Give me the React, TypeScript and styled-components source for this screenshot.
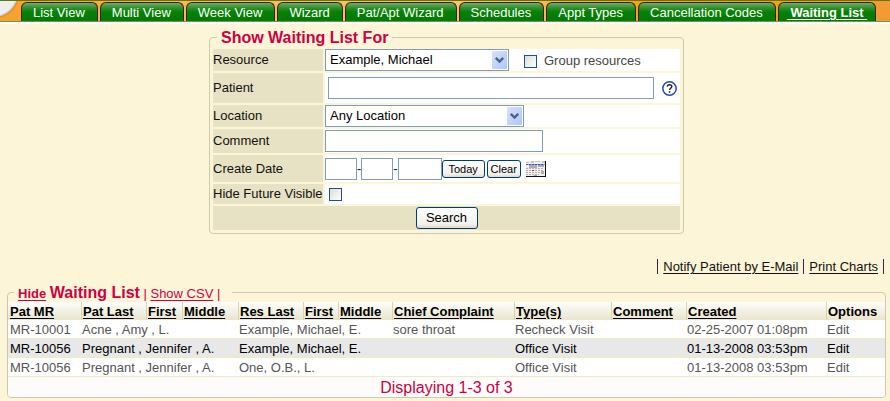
import React from "react";
import styled, { createGlobalStyle, css } from "styled-components";

const GlobalStyle = createGlobalStyle`
  *, *::before, *::after { box-sizing: border-box; }
  body {
    margin: 0;
    background: #fcf5d8;
    color: #111;
    font: 13px/16px "Liberation Sans", Arial, Helvetica, sans-serif;
  }
  input, select, button { font: inherit; color: #000; margin: 0; }
`;

const TabBar = styled.nav`
  position: relative;
  display: flex;
  align-items: flex-end;
  gap: 2px;
  height: 24px;
  padding: 0 14px 1px 21px;
  overflow: hidden;
  border-top: 1px solid #5e7a10;
  border-bottom: 2px solid #fff;
  background: linear-gradient(90deg, #f9a02c 0%, #fdb866 25%, #fdc078 55%, #f9a01c 72%, #f9a01c 88%, #f49a35 100%);
  &::after {
    content: "";
    position: absolute;
    left: 0;
    right: 0;
    bottom: 0;
    height: 1px;
    background: #6f9a4c;
  }
`;

const Orb = styled.svg`
  position: absolute;
  left: 0;
  top: 0;
`;

const Tab = styled.a<{ $active?: boolean }>`
  height: 19px;
  padding: 0 ${(p) => (p.$active ? "8px" : "12px 0 11px")};
  border: 1px solid #3a2205;
  border-bottom: 0;
  border-radius: 6px 6px 0 0;
  background: linear-gradient(#6fae6a 0, #2f8f2a 5px, #058005 9px, #047a04 100%);
  color: #fff;
  line-height: 20px;
  white-space: pre;
  text-decoration: ${(p) => (p.$active ? "underline" : "none")};
  text-underline-offset: 2px;
  font-weight: ${(p) => (p.$active ? "bold" : "normal")};
`;

const Page = styled.main`
  padding: 3px 4px 0 7px;
`;

const Panel = styled.fieldset`
  min-width: 0;
  margin: 0;
  padding: 0;
  border: 1px solid #ccc9b0;
  border-radius: 4px;
`;

const SearchPanel = styled(Panel)`
  width: fit-content;
  margin: 0 auto;
  padding: 0 1px 1px;
`;

const ListPanel = styled(Panel)`
  margin-top: 6px;
`;

const Legend = styled.legend`
  height: 20px;
  margin-left: 6px;
  padding: 0 4px;
  color: #cc0044;
  line-height: 22px;
  white-space: pre;
`;

const Title = styled.span`
  font-size: 16px;
  font-weight: bold;
`;

const LegendLink = styled.a<{ $strong?: boolean }>`
  color: inherit;
  text-underline-offset: 2px;
  font-weight: ${(p) => (p.$strong ? "bold" : "normal")};
`;

const FormTable = styled.table`
  border-collapse: separate;
  border-spacing: 2px;
`;

const FormRow = styled.tr<{ $height: number }>`
  height: ${(p) => p.$height}px;
`;

const LabelCell = styled.th`
  width: 110px;
  padding: 0;
  background: #e7e2c4;
  font-weight: normal;
  text-align: left;
  white-space: nowrap;
`;

const FieldCell = styled.td`
  width: 355px;
  padding: 0;
  background: #fff;
`;

const ActionCell = styled.td`
  padding: 0;
  background: #e7e2c4;
  text-align: center;
`;

const Line = styled.div<{ $indent?: number }>`
  display: flex;
  align-items: center;
  padding-left: ${(p) => p.$indent ?? 0}px;
`;

const TextBox = styled.input<{ $width: number }>`
  width: ${(p) => p.$width}px;
  height: 22px;
  padding: 0 4px;
  border: 1px solid #7f9db9;
  background: #fff;
`;

const SelectWrap = styled.div<{ $width: number }>`
  position: relative;
  width: ${(p) => p.$width}px;
  height: 22px;
`;

const SelectBox = styled.select`
  appearance: none;
  width: 100%;
  height: 100%;
  padding: 0 20px 0 4px;
  border: 1px solid #7f9db9;
  border-radius: 0;
  background: #fff;
`;

const Arrow = styled.svg`
  position: absolute;
  right: 2px;
  top: 2px;
  pointer-events: none;
`;

const Check = styled.input`
  appearance: none;
  width: 13px;
  height: 13px;
  border: 1px solid #1c5180;
  background: linear-gradient(135deg, #dcdcd7, #fff);
`;

const CheckLabel = styled.label`
  display: flex;
  align-items: center;
  gap: 7px;
  margin: 2px 0 0 15px;
  color: #444;
`;

const Button = styled.button<{ $width: number; $small?: boolean }>`
  width: ${(p) => p.$width}px;
  padding: 0;
  border: 1px solid #003c74;
  border-radius: 3px;
  background: linear-gradient(#fff, #f2f1ec 80%, #dcd8cf);
  white-space: nowrap;
  ${(p) =>
    p.$small
      ? css`
          height: 18px;
          margin-right: 2px;
          font-size: 11px;
          line-height: 16px;
        `
      : css`
          height: 22px;
          line-height: 20px;
          vertical-align: middle;
        `}
`;

const IconButton = styled.button<{ $gap: number }>`
  display: flex;
  margin-left: ${(p) => p.$gap}px;
  padding: 0;
  border: 0;
  background: none;
`;

const Links = styled.div`
  display: flex;
  justify-content: flex-end;
  gap: 5px;
  margin-top: 24px;
  padding-right: 2px;
  line-height: 18px;
`;

const Bar = styled.span`
  width: 1px;
  height: 15px;
  margin-top: 1px;
  background: #402048;
`;

const PageLink = styled.a`
  color: #111;
  text-underline-offset: 2px;
`;

const ListTable = styled.table`
  width: 100%;
  border-collapse: separate;
  border-spacing: 0;
  table-layout: fixed;
`;

const HeadCell = styled.th`
  height: 18px;
  padding: 2px 0 0 1px;
  border-left: 1px solid #d8d5b4;
  background: linear-gradient(#fdfdfb, #e9e5cc);
  color: #000;
  line-height: 16px;
  text-align: left;
  white-space: nowrap;
  &:first-child { border-left-color: transparent; }
  a { color: inherit; text-underline-offset: 2px; }
`;

const Row = styled.tr<{ $selected?: boolean }>`
  background: ${(p) => (p.$selected ? "#e8e8e8" : "#fff")};
  color: ${(p) => (p.$selected ? "#000" : "#555")};
`;

const Cell = styled.td`
  height: 19px;
  padding: 2px 0 0 1px;
  border-bottom: 1px solid #efebbb;
  line-height: 16px;
  white-space: nowrap;
  &:first-child { padding-left: 2px; }
  a { color: inherit; text-decoration: none; }
`;

const Footer = styled.td`
  height: 20px;
  padding: 2px 0 0;
  border-radius: 0 0 3px 3px;
  background: #fdfcfa;
  color: #cc0044;
  font-size: 16px;
  line-height: 18px;
  text-align: center;
`;

const tabs = [
  "List View", "Multi View", "Week View", "Wizard", "Pat/Apt Wizard",
  "Schedules", "Appt Types", "Cancellation Codes",
];

const columns: [string, number | undefined][] = [
  ["Pat MR", 73], ["Pat Last", 65], ["First", 36], ["Middle", 56],
  ["Res Last", 65], ["First", 35], ["Middle", 54], ["Chief Complaint", 122],
  ["Type(s)", 97], ["Comment", 75], ["Created", 140], ["Options", undefined],
];

const entries = [
  { mr: "MR-10001", patient: "Acne , Amy , L.", resource: "Example, Michael, E.", complaint: "sore throat", type: "Recheck Visit", created: "02-25-2007 01:08pm" },
  { mr: "MR-10056", patient: "Pregnant , Jennifer , A.", resource: "Example, Michael, E.", complaint: "", type: "Office Visit", created: "01-13-2008 03:53pm", selected: true },
  { mr: "MR-10056", patient: "Pregnant , Jennifer , A.", resource: "One, O.B., L.", complaint: "", type: "Office Visit", created: "01-13-2008 03:53pm" },
];

function DropDown({ id, width, value }: { id: string; width: number; value: string }) {
  return (
    <SelectWrap $width={width}>
      <SelectBox id={id} defaultValue={value}>
        <option>{value}</option>
      </SelectBox>
      <Arrow width="15" height="18" viewBox="0 0 15 18" aria-hidden="true">
        <defs>
          <linearGradient id={`${id}-face`} x1="0" y1="0" x2="1" y2="1">
            <stop offset="0" stopColor="#d6e2fd" />
            <stop offset="1" stopColor="#adc6f8" />
          </linearGradient>
        </defs>
        <rect width="15" height="18" rx="1" fill={`url(#${id}-face)`} />
        <path d="M3.8 6.8 7.5 10.5 11.2 6.8" fill="none" stroke="#4d6185" strokeWidth="2.4" />
      </Arrow>
    </SelectWrap>
  );
}

function HelpIcon() {
  return (
    <svg width="15" height="15" viewBox="0 0 15 15" aria-hidden="true">
      <circle cx="7.5" cy="7.5" r="6.7" fill="#fff" stroke="#1f4bb8" strokeWidth="1.5" />
      <path d="M5.3 5.8C5.3 4.3 6.2 3.7 7.5 3.7s2.3.7 2.3 1.9c0 1.5-2.2 1.6-2.2 3.4" fill="none" stroke="#222" strokeWidth="1.4" />
      <rect x="6.8" y="10.2" width="1.5" height="1.5" fill="#222" />
    </svg>
  );
}

function CalendarIcon() {
  return (
    <svg width="20" height="16" viewBox="0 0 20 16" shapeRendering="crispEdges" aria-hidden="true">
      <rect width="19" height="15" fill="#f0f0f0" />
      <path d="M0 1h3v1H0zM5 0h3v2H5zM9 0h5v1H9zM16 0h3v2h-3z" fill="#c4c4c4" />
      <path d="M0 3h19v1H0z" fill="#8f96dc" />
      <path d="M0 3h2v1H0zM3 3h2v1H3zM6 3h2v1H6zM9 3h2v1H9zM12 3h2v1h-2zM15 3h2v1h-2z" fill="#4450d0" />
      <path d="M3 4h8v3H3zM12 4h6v2h-6zM15 10h3v3h-3z" fill="#acacac" />
      <path d="M0 7.5h18M0 9.5h18M0 11.5h18M0 13.5h13" stroke="#b4b4b4" strokeDasharray="2 1" />
      <path d="M6 9h2v1H6z" fill="#e02020" />
      <path d="M8 14h3v1H8z" fill="#aaa" />
      <path d="M19 0h1v16H0v-1h19z" fill="#111" />
    </svg>
  );
}

export default function App() {
  return (
    <>
      <GlobalStyle />
      <TabBar>
        <Orb width="22" height="20" viewBox="0 0 22 20" aria-hidden="true">
          <circle cx="-5" cy="-7" r="24" fill="#e08f28" />
          <circle cx="-6" cy="-8" r="24" fill="#d0cfcc" />
          <circle cx="-7" cy="-9" r="24" fill="#efefef" />
        </Orb>
        {tabs.map((t) => <Tab href="#" key={t}>{t}</Tab>)}
        <Tab href="#" $active aria-current="page">{"\u00a0Waiting List\u00a0"}</Tab>
      </TabBar>
      <Page>
        <SearchPanel>
          <Legend><Title>Show Waiting List For</Title></Legend>
          <FormTable>
            <tbody>
              <FormRow $height={22}>
                <LabelCell><label htmlFor="resource">Resource</label></LabelCell>
                <FieldCell>
                  <Line>
                    <DropDown id="resource" width={184} value="Example, Michael" />
                    <CheckLabel><Check type="checkbox" />Group resources</CheckLabel>
                  </Line>
                </FieldCell>
              </FormRow>
              <FormRow $height={30}>
                <LabelCell><label htmlFor="patient">Patient</label></LabelCell>
                <FieldCell>
                  <Line $indent={3}>
                    <TextBox id="patient" $width={326} />
                    <IconButton type="button" $gap={8} aria-label="Help"><HelpIcon /></IconButton>
                  </Line>
                </FieldCell>
              </FormRow>
              <FormRow $height={22}>
                <LabelCell><label htmlFor="location">Location</label></LabelCell>
                <FieldCell><DropDown id="location" width={199} value="Any Location" /></FieldCell>
              </FormRow>
              <FormRow $height={24}>
                <LabelCell><label htmlFor="comment">Comment</label></LabelCell>
                <FieldCell><Line><TextBox id="comment" $width={218} /></Line></FieldCell>
              </FormRow>
              <FormRow $height={27}>
                <LabelCell><label htmlFor="month">Create Date</label></LabelCell>
                <FieldCell>
                  <Line>
                    <TextBox id="month" $width={32} />-
                    <TextBox aria-label="Day" $width={32} />-
                    <TextBox aria-label="Year" $width={44} />
                    <Button type="button" $small $width={43}>Today</Button>
                    <Button type="button" $small $width={34}>Clear</Button>
                    <IconButton type="button" $gap={3} aria-label="Calendar"><CalendarIcon /></IconButton>
                  </Line>
                </FieldCell>
              </FormRow>
              <FormRow $height={20}>
                <LabelCell><label htmlFor="future">Hide Future Visible</label></LabelCell>
                <FieldCell><Line $indent={4}><Check id="future" type="checkbox" /></Line></FieldCell>
              </FormRow>
              <FormRow $height={24}>
                <ActionCell colSpan={2}><Button type="submit" $width={62}>Search</Button></ActionCell>
              </FormRow>
            </tbody>
          </FormTable>
        </SearchPanel>
        <Links>
          <Bar /><PageLink href="#">Notify Patient by E-Mail</PageLink>
          <Bar /><PageLink href="#">Print Charts</PageLink><Bar />
        </Links>
        <ListPanel>
          <Legend>
            <LegendLink href="#" $strong>Hide</LegendLink>{" "}
            <Title>Waiting List</Title>{" | "}
            <LegendLink href="#">Show CSV</LegendLink>{" |  "}
          </Legend>
          <ListTable>
            <colgroup>
              {columns.map(([, w], i) => <col key={i} width={w} />)}
            </colgroup>
            <thead>
              <tr>
                {columns.map(([name, w], i) => (
                  <HeadCell key={i} scope="col">{w ? <a href="#">{name}</a> : name}</HeadCell>
                ))}
              </tr>
            </thead>
            <tbody>
              {entries.map((e, i) => (
                <Row key={i} $selected={e.selected}>
                  <Cell>{e.mr}</Cell>
                  <Cell colSpan={3}>{e.patient}</Cell>
                  <Cell colSpan={3}>{e.resource}</Cell>
                  <Cell>{e.complaint}</Cell>
                  <Cell>{e.type}</Cell>
                  <Cell />
                  <Cell>{e.created}</Cell>
                  <Cell><a href="#">Edit</a></Cell>
                </Row>
              ))}
            </tbody>
            <tfoot>
              <tr><Footer colSpan={12}>Displaying 1-3 of 3</Footer></tr>
            </tfoot>
          </ListTable>
        </ListPanel>
      </Page>
    </>
  );
}
